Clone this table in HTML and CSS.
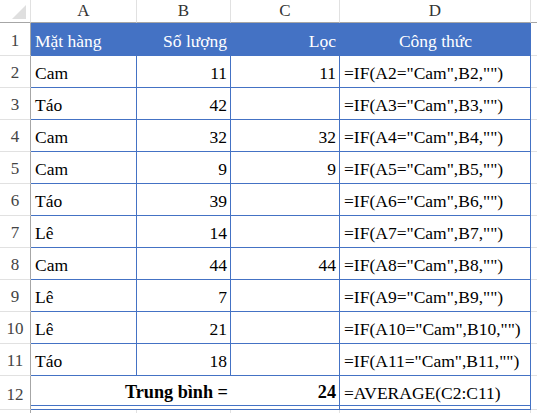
FILE: index.html
```html
<!DOCTYPE html>
<html lang="vi">

<head>
    <meta charset="UTF-8">
    <meta name="viewport" content="width=device-width, initial-scale=1.0">
    <title>Lọc</title>

    <link rel="stylesheet" href="styles.css">
</head>

<body>
    <main class="sheet">
        <!-- column headers -->
        <div class="corner"><span class="tri"></span></div>
        <div class="col-head">A</div>
        <div class="col-head">B</div>
        <div class="col-head">C</div>
        <div class="col-head">D</div>
        <div class="col-head"></div>

        <div class="row-head">1</div>
        <div class="cell head">Mặt hàng</div>
        <div class="cell head num">Số lượng</div>
        <div class="cell head num">Lọc</div>
        <div class="cell head mid">Công thức</div>
        <div class="cell grid"></div>

        <div class="row-head">2</div>
        <div class="cell data">Cam</div>
        <div class="cell data num">11</div>
        <div class="cell data num">11</div>
        <div class="cell data">=IF(A2="Cam",B2,"")</div>
        <div class="cell grid"></div>

        <div class="row-head">3</div>
        <div class="cell data">Táo</div>
        <div class="cell data num">42</div>
        <div class="cell data num"></div>
        <div class="cell data">=IF(A3="Cam",B3,"")</div>
        <div class="cell grid"></div>

        <div class="row-head">4</div>
        <div class="cell data">Cam</div>
        <div class="cell data num">32</div>
        <div class="cell data num">32</div>
        <div class="cell data">=IF(A4="Cam",B4,"")</div>
        <div class="cell grid"></div>

        <div class="row-head">5</div>
        <div class="cell data">Cam</div>
        <div class="cell data num">9</div>
        <div class="cell data num">9</div>
        <div class="cell data">=IF(A5="Cam",B5,"")</div>
        <div class="cell grid"></div>

        <div class="row-head">6</div>
        <div class="cell data">Táo</div>
        <div class="cell data num">39</div>
        <div class="cell data num"></div>
        <div class="cell data">=IF(A6="Cam",B6,"")</div>
        <div class="cell grid"></div>

        <div class="row-head">7</div>
        <div class="cell data">Lê</div>
        <div class="cell data num">14</div>
        <div class="cell data num"></div>
        <div class="cell data">=IF(A7="Cam",B7,"")</div>
        <div class="cell grid"></div>

        <div class="row-head">8</div>
        <div class="cell data">Cam</div>
        <div class="cell data num">44</div>
        <div class="cell data num">44</div>
        <div class="cell data">=IF(A8="Cam",B8,"")</div>
        <div class="cell grid"></div>

        <div class="row-head">9</div>
        <div class="cell data">Lê</div>
        <div class="cell data num">7</div>
        <div class="cell data num"></div>
        <div class="cell data">=IF(A9="Cam",B9,"")</div>
        <div class="cell grid"></div>

        <div class="row-head">10</div>
        <div class="cell data">Lê</div>
        <div class="cell data num">21</div>
        <div class="cell data num"></div>
        <div class="cell data">=IF(A10="Cam",B10,"")</div>
        <div class="cell grid"></div>

        <div class="row-head">11</div>
        <div class="cell data">Táo</div>
        <div class="cell data num">18</div>
        <div class="cell data num"></div>
        <div class="cell data">=IF(A11="Cam",B11,"")</div>
        <div class="cell grid"></div>

        <div class="row-head">12</div>
        <div class="cell total label num">Trung bình =</div>
        <div class="cell total data num bold">24</div>
        <div class="cell total data">=AVERAGE(C2:C11)</div>
        <div class="cell grid"></div>

        <div class="row-head last"></div>
        <div class="cell last"></div>
        <div class="cell last"></div>
        <div class="cell last"></div>
        <div class="cell last"></div>
        <div class="cell last"></div>
    </main>
</body>

</html>
```

FILE: styles.css
```css
body {
    margin: 0;
    background: #ffffff;
    font-family: "Liberation Serif", "Times New Roman", serif;
    font-size: 17.5px;
    color: #000000;
}

.sheet {
    display: grid;
    grid-template-columns: 31px 106px 94px 109px 191px 1fr;
    grid-template-rows: 23px 33px repeat(10, 32px) 34px 1fr;
    height: 413px;
    overflow: hidden;
}

.sheet > div {
    box-sizing: border-box;
    white-space: nowrap;
    overflow: hidden;
}

.corner {
    display: flex;
    justify-content: flex-end;
    align-items: flex-end;
    padding: 0 4px 3px 0;
    border-right: 1px solid #e1e1e1;
    border-bottom: 1px solid #a6a6a6;
}

.tri {
    width: 14px;
    height: 14px;
    background: #dfdfdf;
    clip-path: polygon(100% 0, 100% 100%, 0 100%);
}

.col-head {
    display: flex;
    justify-content: center;
    align-items: center;
    color: #333333;
    font-size: 17px;
    border-right: 1px solid #e1e1e1;
    border-bottom: 1px solid #a6a6a6;
}

.row-head {
    display: flex;
    justify-content: center;
    align-items: flex-end;
    padding-bottom: 4px;
    color: #444444;
    font-size: 17px;
    border-right: 1px solid #a6a6a6;
    border-bottom: 1px solid #e1e1e1;
}

.cell {
    display: flex;
    align-items: flex-end;
    padding: 0 3px 4px 4px;
    line-height: 1.15;
    border-right: 1px solid #e1e1e1;
    border-bottom: 1px solid #e1e1e1;
}

.cell.head {
    background: #4472c4;
    color: #ffffff;
    border-color: #4472c4;
}

.cell.data {
    border-right-color: #4472c4;
    border-bottom-color: #4472c4;
}

.num {
    justify-content: flex-end;
}

.mid {
    justify-content: center;
}

.bold,
.label {
    font-weight: bold;
    font-size: 18.2px;
}

.label {
    grid-column: span 2;
    border-right: none;
}

/* total row: double rule underneath */
.cell.total {
    border-bottom: 1px solid #4472c4;
    background: linear-gradient(#4472c4, #4472c4) left bottom 3px / 100% 1px no-repeat;
    padding-bottom: 6px;
}

.cell.last,
.row-head.last {
    border-bottom: none;
}
```
